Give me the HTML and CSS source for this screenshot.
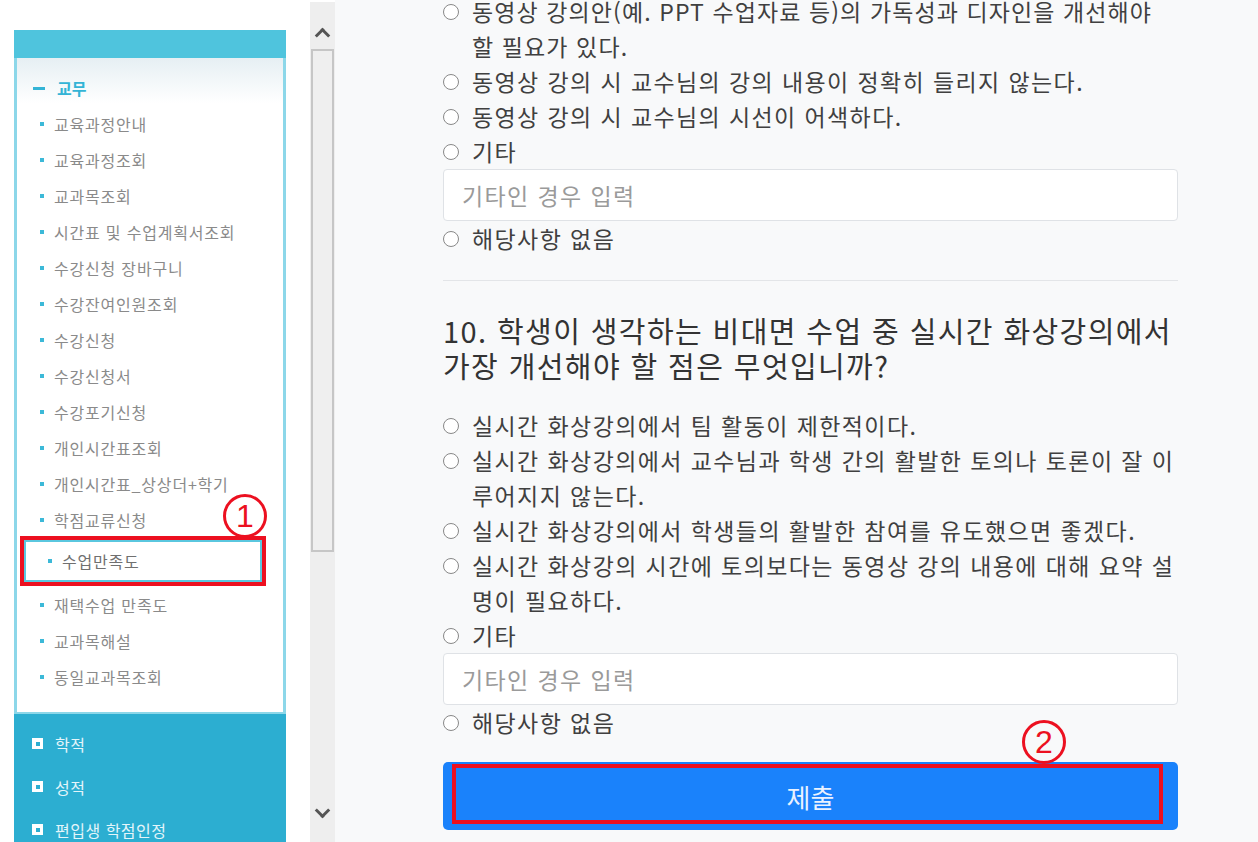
FILE: index.html
```html
<!DOCTYPE html>
<html lang="ko">
<head>
    <meta charset="UTF-8">
    <meta name="viewport" content="width=device-width, initial-scale=1.0">
    <title>수업만족도</title>
    <link rel="stylesheet" href="styles.css">
</head>
<body>
<div class="page">

    <!-- Left menu -->
    <aside class="side">
        <div class="menu">
            <div class="menu-head"></div>
            <div class="menu-open">
                <div class="menu-title"><span class="dash"></span>교무</div>
                <ul class="sub">
                    <li>교육과정안내</li>
                    <li>교육과정조회</li>
                    <li>교과목조회</li>
                    <li>시간표 및 수업계획서조회</li>
                    <li>수강신청 장바구니</li>
                    <li>수강잔여인원조회</li>
                    <li>수강신청</li>
                    <li>수강신청서</li>
                    <li>수강포기신청</li>
                    <li>개인시간표조회</li>
                    <li>개인시간표_상상더+학기</li>
                    <li>학점교류신청</li>
                    <li class="active">수업만족도<span class="mark mark-1">1</span></li>
                    <li>재택수업 만족도</li>
                    <li>교과목해설</li>
                    <li>동일교과목조회</li>
                </ul>
            </div>
            <ul class="menu-closed">
                <li><span class="sq"></span>학적</li>
                <li><span class="sq"></span>성적</li>
                <li><span class="sq"></span>편입생 학점인정</li>
            </ul>
        </div>
    </aside>

    <!-- Scrollbar -->
    <div class="scrollbar">
        <span class="arrow arrow-up"></span>
        <div class="thumb"></div>
        <div class="track"></div>
        <span class="arrow arrow-down"></span>
    </div>

    <!-- Survey -->
    <main class="survey">
        <ul class="options first">
            <li><span class="radio"></span><span class="txt">동영상 강의안(예. PPT 수업자료 등)의 가독성과 디자인을 개선해야<br>할 필요가 있다.</span></li>
            <li><span class="radio"></span><span class="txt">동영상 강의 시 교수님의 강의 내용이 정확히 들리지 않는다.</span></li>
            <li><span class="radio"></span><span class="txt">동영상 강의 시 교수님의 시선이 어색하다.</span></li>
            <li><span class="radio"></span><span class="txt">기타</span></li>
        </ul>
        <input class="etc" type="text" placeholder="기타인 경우 입력">
        <ul class="options">
            <li><span class="radio"></span><span class="txt">해당사항 없음</span></li>
        </ul>

        <hr class="divider">

        <h3 class="question">10. 학생이 생각하는 비대면 수업 중 실시간 화상강의에서<br>가장 개선해야 할 점은 무엇입니까?</h3>

        <ul class="options">
            <li><span class="radio"></span><span class="txt">실시간 화상강의에서 팀 활동이 제한적이다.</span></li>
            <li><span class="radio"></span><span class="txt">실시간 화상강의에서 교수님과 학생 간의 활발한 토의나 토론이 잘 이<br>루어지지 않는다.</span></li>
            <li><span class="radio"></span><span class="txt">실시간 화상강의에서 학생들의 활발한 참여를 유도했으면 좋겠다.</span></li>
            <li><span class="radio"></span><span class="txt">실시간 화상강의 시간에 토의보다는 동영상 강의 내용에 대해 요약 설<br>명이 필요하다.</span></li>
            <li><span class="radio"></span><span class="txt">기타</span></li>
        </ul>
        <input class="etc" type="text" placeholder="기타인 경우 입력">
        <ul class="options">
            <li><span class="radio"></span><span class="txt">해당사항 없음</span></li>
        </ul>

        <div class="submit-wrap">
            <button class="submit">제출</button>
            <span class="red-box"></span>
            <span class="mark mark-2">2</span>
        </div>
    </main>

</div>
</body>
</html>
```

FILE: styles.css
```css
* {
    box-sizing: border-box;
}
body {
    margin: 0;
    background: #fff;
    font-family: "Noto Sans CJK KR", "Noto Sans", sans-serif;
    overflow: hidden;
}
ul {
    list-style: none;
    margin: 0;
    padding: 0;
}
.page {
    display: flex;
    height: 842px;
}

/* left menu */
.side {
    width: 310px;
    flex-shrink: 0;
    padding: 30px 0 0 14px;
}
.menu {
    width: 272px;
}
.menu-head {
    height: 28px;
    background: #4fc4dd;
}
.menu-open {
    border-left: 3px solid #8cd7e9;
    border-right: 3px solid #8cd7e9;
    border-bottom: 2px solid #8cd7e9;
    background: linear-gradient(#e6eff3, #fff 45px);
    padding: 18px 0 17px;
}
.menu-title {
    display: flex;
    align-items: center;
    height: 24px;
    margin-bottom: 6px;
    padding-left: 16px;
    color: #34b4d6;
    font-weight: bold;
    font-size: 16px;
}
.dash {
    width: 12px;
    height: 3px;
    background: #34b4d6;
    margin-right: 12px;
}
.sub li {
    display: flex;
    align-items: center;
    height: 36px;
    padding-left: 23px;
    color: #8a8a8a;
    font-size: 16px;
    letter-spacing: 0.8px;
}
.sub li::before {
    content: "";
    width: 4px;
    height: 4px;
    background: #3cb9d8;
    margin-right: 10px;
}
.sub li.active {
    position: relative;
    height: 42px;
    width: 238px;
    margin: 2px 0 5px 7px;
    padding-left: 22px;
    border: 2px solid #5ac7df;
    background: #fff;
    outline: 4px solid #ec1020;
    color: #707070;
}
.menu-closed {
    background: #2caed1;
    padding: 8px 0 20px;
}
.menu-closed li {
    display: flex;
    align-items: center;
    height: 43px;
    padding-left: 18px;
    color: #e4f5fa;
    font-size: 16px;
    letter-spacing: 0.5px;
}
.sq {
    width: 11px;
    height: 11px;
    background: #fff;
    margin-right: 12px;
    display: flex;
    align-items: center;
    justify-content: center;
}
.sq::after {
    content: "";
    width: 4px;
    height: 4px;
    background: #2caed1;
}

/* annotation circles */
.mark {
    position: absolute;
    width: 44px;
    height: 44px;
    border: 3px solid #ec1020;
    border-radius: 50%;
    color: #ec1020;
    font-family: "Liberation Sans", sans-serif;
    font-size: 32px;
    line-height: 38px;
    text-align: center;
    letter-spacing: 0;
}
.mark-1 {
    left: 197px;
    top: -48px;
}
.mark-2 {
    left: 579px;
    top: -42px;
}

/* scrollbar */
.scrollbar {
    width: 25px;
    flex-shrink: 0;
    margin-top: 2px;
    background: #eeeeee;
    display: flex;
    flex-direction: column;
    align-items: center;
}
.arrow {
    width: 11px;
    height: 11px;
    border-left: 3px solid #555;
    border-top: 3px solid #555;
}
.arrow-up {
    transform: rotate(45deg);
    margin: 28px 0 8px;
}
.arrow-down {
    transform: rotate(225deg);
    margin: 0 0 26px;
}
.thumb {
    width: 23px;
    height: 503px;
    border: 2px solid #c6c6c6;
    background: #efefef;
}
.track {
    flex: 1;
}

/* survey */
.survey {
    flex: 1;
    background: #f8f9fa;
    padding: 0 80px 0 108px;
    color: #404040;
}
.options li {
    display: flex;
    align-items: flex-start;
    font-size: 23px;
    line-height: 35px;
    letter-spacing: 1.4px;
    white-space: nowrap;
}
.options.first {
    margin-top: -6px;
}
.options.first li:first-child {
    letter-spacing: 1.1px;
}
.radio {
    width: 16px;
    height: 16px;
    flex-shrink: 0;
    border: 1.5px solid #888;
    border-radius: 50%;
    background: #fff;
    margin: 10px 13px 0 0;
}
.etc {
    display: block;
    width: 100%;
    height: 52px;
    border: 1px solid #dfe2e6;
    border-radius: 4px;
    background: #fff;
    padding: 0 18px;
    font-family: inherit;
    font-size: 23px;
    letter-spacing: 1.4px;
    color: #404040;
}
.etc::placeholder {
    color: #9a9a9a;
}
.divider {
    border: 0;
    border-top: 1px solid #e3e5e8;
    margin: 24px 0 0;
}
.question {
    margin: 32px 0 25px;
    font-weight: normal;
    font-size: 29px;
    line-height: 35px;
    letter-spacing: 1.4px;
    color: #333;
}
.submit-wrap {
    position: relative;
    margin-top: 22px;
}
.submit {
    display: block;
    width: 100%;
    height: 68px;
    border: 0;
    border-radius: 5px;
    background: #1a82fb;
    color: #eaf2ff;
    font-family: inherit;
    font-size: 26px;
    cursor: pointer;
}
.red-box {
    position: absolute;
    left: 9px;
    right: 15px;
    top: 2px;
    bottom: 6px;
    border: 4px solid #ec1020;
}
```
